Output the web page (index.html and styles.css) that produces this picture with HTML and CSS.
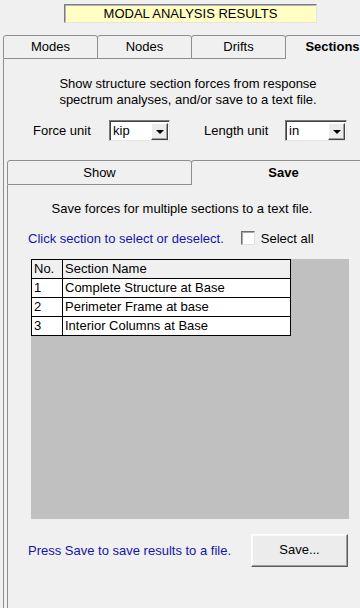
FILE: index.html
```html
<!DOCTYPE html>
<html>
<head>
<meta charset="utf-8">
<link rel="stylesheet" href="styles.css">
</head>
<body>
<div class="title-row"><div class="title">MODAL ANALYSIS RESULTS</div></div>
<div class="tabs">
  <div class="tab">Modes</div>
  <div class="tab">Nodes</div>
  <div class="tab">Drifts</div>
  <div class="tab active">Sections</div>
</div>
<div class="panel">
  <div class="intro">Show structure section forces from response<br>spectrum analyses, and/or save to a text file.</div>
  <div class="units">
    <span class="lbl lbl-force">Force unit</span>
    <div class="combo combo-force"><span class="combo-val">kip</span><span class="combo-btn"><span class="arrow"></span></span></div>
    <span class="lbl lbl-length">Length unit</span>
    <div class="combo combo-length"><span class="combo-val">in</span><span class="combo-btn"><span class="arrow"></span></span></div>
  </div>
  <div class="subtabs">
    <div class="subtab">Show</div>
    <div class="subtab active">Save</div>
  </div>
  <div class="subpanel">
    <div class="save-desc">Save forces for multiple sections to a text file.</div>
    <div class="select-row">
      <span class="blue">Click section to select or deselect.</span>
      <span class="check"></span>
      <span class="check-lbl">Select all</span>
    </div>
    <div class="grid">
      <table class="sections">
        <tr class="head"><td class="c1">No.</td><td class="c2">Section Name</td></tr>
        <tr><td class="c1">1</td><td class="c2">Complete Structure at Base</td></tr>
        <tr><td class="c1">2</td><td class="c2">Perimeter Frame at base</td></tr>
        <tr><td class="c1">3</td><td class="c2">Interior Columns at Base</td></tr>
      </table>
    </div>
    <div class="save-row">
      <span class="blue">Press Save to save results to a file.</span>
      <div class="btn">Save...</div>
    </div>
  </div>
</div>
</body>
</html>
```
FILE: styles.css
```css
html, body {
  margin: 0;
  padding: 0;
}
body {
  width: 360px;
  height: 608px;
  overflow: hidden;
  display: flex;
  flex-direction: column;
  background: #f0f0f0;
  font-family: "Liberation Sans", Arial, sans-serif;
  font-size: 13px;
  color: #000;
}
.title-row {
  padding-top: 4px;
  padding-left: 64px;
}
.title {
  width: 253px;
  height: 19px;
  box-sizing: border-box;
  background: #ffffc4;
  border: 1px solid;
  border-color: #7c7c7c #e4e4e4 #e4e4e4 #7c7c7c;
  box-shadow: inset 1px 1px 0 #b4b4b4;
  text-align: center;
  line-height: 17px;
}
.tabs {
  display: flex;
  margin-top: 12px;
  margin-left: 3px;
  height: 24px;
  overflow: hidden;
}
.tab {
  flex: none;
  width: 95px;
  height: 24px;
  box-sizing: border-box;
  border: 1px solid #8e8e8e;
  border-radius: 3px 3px 0 0;
  margin-left: -1px;
  text-align: center;
  line-height: 22px;
  background: #f0f0f0;
}
.tab:first-child {
  margin-left: 0;
}
.tab.active {
  font-weight: bold;
  border-bottom: none;
}
.panel {
  flex: 1;
  min-height: 0;
  display: flex;
  flex-direction: column;
  margin-left: 3px;
  border-left: 1px solid #8e8e8e;
}
.intro {
  padding-top: 17px;
  padding-left: 12px;
  text-align: center;
  line-height: 16px;
}
.units {
  display: flex;
  align-items: center;
  margin-top: 12px;
  padding-left: 29px;
  height: 21px;
}
.lbl-force {
  width: 76px;
}
.lbl-length {
  margin-left: 34px;
  width: 81px;
}
.combo {
  display: flex;
  align-items: center;
  height: 21px;
  box-sizing: border-box;
  background: #fff;
  border: 1px solid;
  border-color: #7a7a7a #e6e6e6 #e6e6e6 #7a7a7a;
  box-shadow: inset 1px 1px 0 #404040;
  padding: 2px 1px 1px 2px;
}
.combo-force {
  width: 61px;
}
.combo-length {
  width: 62px;
}
.combo-val {
  flex: 1;
  line-height: 16px;
  padding-left: 1px;
}
.combo-btn {
  width: 17px;
  height: 17px;
  box-sizing: border-box;
  background: #ececec;
  border: 1px solid;
  border-color: #ffffff #404040 #404040 #ffffff;
  box-shadow: inset -1px -1px 0 #a0a0a0;
  display: flex;
  align-items: center;
  justify-content: center;
}
.arrow {
  width: 0;
  height: 0;
  border-left: 4px solid transparent;
  border-right: 4px solid transparent;
  border-top: 4px solid #000;
  margin-top: 1px;
}
.subtabs {
  display: flex;
  margin-top: 19px;
  margin-left: 3px;
  height: 25px;
  overflow: hidden;
}
.subtab {
  flex: none;
  width: 185px;
  height: 25px;
  box-sizing: border-box;
  border: 1px solid #8e8e8e;
  border-radius: 3px 3px 0 0;
  text-align: center;
  line-height: 23px;
  background: #f0f0f0;
}
.subtab.active {
  margin-left: -1px;
  font-weight: bold;
  border-bottom: none;
}
.subpanel {
  flex: 1;
  min-height: 0;
  margin-left: 3px;
  border-left: 1px solid #8e8e8e;
}
.save-desc {
  width: 348px;
  padding-top: 16px;
  text-align: center;
  line-height: 16px;
}
.select-row {
  display: flex;
  align-items: center;
  height: 16px;
  margin-top: 13px;
  padding-left: 20px;
}
.blue {
  color: #1414a8;
}
.check {
  width: 14px;
  height: 14px;
  box-sizing: border-box;
  margin-left: 17px;
  background: #fff;
  border: 1px solid;
  border-color: #707070 #e0e0e0 #e0e0e0 #707070;
  box-shadow: inset 1px 1px 0 #a8a8a8;
}
.check-lbl {
  margin-left: 6px;
}
.grid {
  margin-top: 13px;
  margin-left: 23px;
  width: 318px;
  height: 260px;
  background: #c0c0c0;
}
.sections {
  border-collapse: separate;
  border-spacing: 0;
  border-top: 1px solid #000;
  border-left: 1px solid #000;
  font-size: 13px;
}
.sections td {
  height: 18px;
  padding: 0;
  border-right: 1px solid #000;
  border-bottom: 1px solid #000;
  background: #fff;
  line-height: 18px;
  white-space: nowrap;
}
.sections .head td {
  background: #f0f0f0;
}
.sections .c1 {
  width: 28px;
  padding-left: 2px;
}
.sections .c2 {
  width: 225px;
  padding-left: 2px;
}
.save-row {
  display: flex;
  align-items: center;
  justify-content: space-between;
  margin-top: 15px;
  margin-left: 20px;
  width: 320px;
}
.btn {
  width: 97px;
  height: 33px;
  box-sizing: border-box;
  border: 1px solid;
  border-color: #ffffff #5a5a5a #5a5a5a #ffffff;
  box-shadow: inset -1px -1px 0 #a0a0a0, inset 1px 1px 0 #f8f8f8;
  background: #ececec;
  text-align: center;
  line-height: 30px;
}
```
